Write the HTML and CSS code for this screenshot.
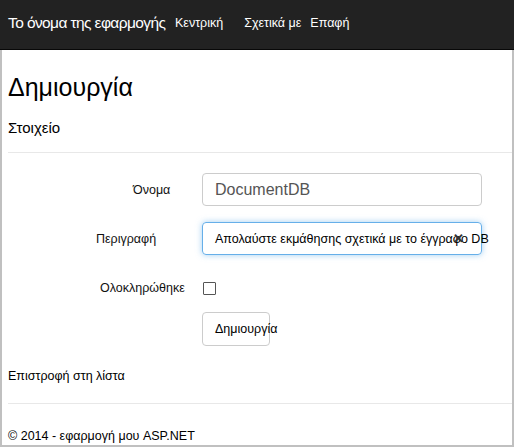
FILE: index.html
```html
<!DOCTYPE html>
<html lang="el">
<head>
<meta charset="utf-8">
<title>Δημιουργία</title>
<link rel="stylesheet" href="styles.css">
</head>
<body>
<nav class="navbar">
  <span class="brand">Το όνομα της εφαρμογής</span>
  <span class="nav-link home">Κεντρική</span>
  <span class="nav-link about">Σχετικά με</span>
  <span class="nav-link contact">Επαφή</span>
</nav>
<div class="frame">
  <main class="content">
    <h1 class="title">Δημιουργία</h1>
    <h4 class="subtitle">Στοιχείο</h4>
    <hr class="rule">
    <form class="form">
      <div class="row">
        <label class="label label-name">Όνομα</label>
        <div class="input">DocumentDB</div>
      </div>
      <div class="row">
        <label class="label label-desc">Περιγραφή</label>
        <div class="input focused"><span class="desc-text">Απολαύστε εκμάθησης σχετικά με το έγγραφο DB</span><span class="clear">✕</span></div>
      </div>
      <div class="row row-check">
        <label class="label label-done">Ολοκληρώθηκε</label>
        <span class="checkbox"></span>
      </div>
      <div class="row row-btn">
        <span class="label"></span>
        <span class="button"><span class="button-text">Δημιουργία</span></span>
      </div>
    </form>
    <div class="back">Επιστροφή στη λίστα</div>
    <hr class="rule rule-footer">
    <footer class="footer">© 2014 - εφαρμογή μου ASP.NET</footer>
  </main>
</div>
</body>
</html>
```
FILE: styles.css
```css
* { box-sizing: border-box; }
html, body { margin: 0; padding: 0; }
body {
  width: 514px;
  height: 447px;
  overflow: hidden;
  font-family: "Liberation Sans", Arial, sans-serif;
  color: #000;
  background: #fff;
}
.navbar {
  height: 50px;
  background: #222;
  border-bottom: 1px solid #080808;
  display: flex;
  align-items: center;
  padding: 0 0 4px 8px;
  color: #fff;
}
.brand {
  font-size: 15.5px;
  color: #fff;
  letter-spacing: -0.6px;
  width: 167px;
  white-space: nowrap;
}
.nav-link {
  font-size: 12.5px;
  color: #fff;
}
.home { margin-right: 21px; }
.about { margin-right: 9px; }
.frame {
  height: 397px;
  border-left: 2px solid #c0c0c0;
  border-right: 2px solid #c0c0c0;
  border-bottom: 2px solid #c0c0c0;
}
.content {
  padding: 0 0 0 6px;
}
.title {
  margin: 0;
  padding-top: 23px;
  font-size: 25px;
  font-weight: normal;
  line-height: 29px;
}
.subtitle {
  margin: 0;
  padding-top: 17px;
  font-size: 15px;
  font-weight: normal;
  line-height: 18px;
}
.rule {
  border: 0;
  border-top: 1px solid #e8e8e8;
  margin: 15px 0 0 0;
}
.form {
  padding-top: 20px;
}
.row {
  display: flex;
  align-items: center;
  height: 33px;
  margin-bottom: 16px;
}
.label {
  width: 194px;
  flex: none;
  font-size: 12.5px;
  color: #111;
}
.label-name { padding-left: 125px; }
.label-desc { padding-left: 88px; }
.label-done { padding-left: 92px; }
.input {
  width: 280px;
  height: 33px;
  border: 1px solid #ccc;
  border-radius: 4px;
  padding: 0 12px;
  display: flex;
  align-items: center;
  font-size: 16px;
  color: #555;
  position: relative;
}
.focused {
  border-color: #66afe9;
  box-shadow: 0 0 6px rgba(102, 175, 233, 0.6);
  font-size: 12.5px;
  color: #000;
  white-space: nowrap;
}
.clear {
  position: absolute;
  left: 250px;
  top: 8px;
  font-size: 13px;
  color: #333;
  font-weight: bold;
}
.row-check {
  height: 14px;
  margin-top: 26px;
  margin-bottom: 17px;
}
.checkbox {
  width: 13px;
  height: 13px;
  border: 1px solid #555;
  border-radius: 1px;
  margin-left: 1px;
}
.row-btn {
  margin-bottom: 0;
}
.button {
  width: 68px;
  height: 34px;
  border: 1px solid #ccc;
  border-radius: 4px;
  padding-left: 12px;
  display: flex;
  align-items: center;
  font-size: 12.5px;
  white-space: nowrap;
}
.back {
  margin-top: 24px;
  font-size: 12.5px;
  line-height: 15px;
}
.rule-footer {
  margin-top: 19px;
}
.footer {
  margin-top: 25px;
  font-size: 12.5px;
  line-height: 15px;
}
```
